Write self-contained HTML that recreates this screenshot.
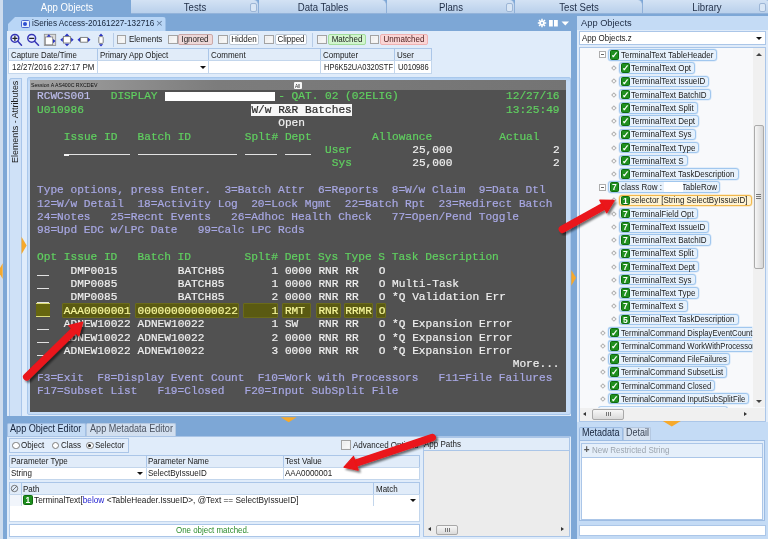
<!DOCTYPE html><html><head><meta charset="utf-8"><title>App Objects</title><style>
*{box-sizing:border-box;margin:0;padding:0}
html,body{width:768px;height:539px;overflow:hidden;background:#7da7d6}
body{filter:blur(.45px);position:relative;font-family:"Liberation Sans",sans-serif;font-size:8.8px;color:#1b1b1b;line-height:10px}
.a{position:absolute;white-space:pre}
.x{position:absolute;white-space:pre;line-height:10px;height:10px;transform-origin:0 0;transform:scaleX(.91)}
.xc{position:absolute;white-space:pre;line-height:10px;height:10px;text-align:center;transform-origin:50% 0;transform:scaleX(.91)}
.t{position:absolute;white-space:pre;font-family:"Liberation Mono",monospace;font-size:11.17px;line-height:13.4px;height:13.4px;letter-spacing:-.002px;-webkit-text-stroke:.2px}
.g{color:#60d060}.w{color:#efefef}.l{color:#a8a8e4}.p{color:#bcbcea}.y{color:#f6f69a}
.toptab{position:absolute;top:0;height:13.5px;width:128px;background:linear-gradient(#d3e2f4,#b9d0eb);border-right:1px solid #8fb0d8;border-bottom:1px solid #93b3da;border-radius:0 5px 0 0}
.cb{position:absolute;width:9.5px;height:9.5px;background:linear-gradient(135deg,#e9e9e9,#fdfdfd);border:1px solid #a3a3a3;box-shadow:inset 0 0 0 1px #f3f3f3}
.btn{position:absolute;height:11.5px;border:1px solid #bcc7d4;border-radius:2px;background:#fff}
.hd{position:absolute;background:#e1ecf9;border:1px solid #abc6e8}
.cell{position:absolute;background:#fff;border:1px solid #c3d6ec}
.ti{position:absolute;height:11.5px;border:1px solid #a1c7ee;border-radius:3px;background:#e6f1fc;box-shadow:0 0 0 .5px #cfe3f8}
.ic{position:absolute;width:9.5px;height:9.5px;border-radius:1.5px;background:#1f8f1f;border:.5px solid #0f6a0f;color:#fff;font-size:8.5px;font-weight:bold;line-height:9px;text-align:center}
.dm{position:absolute;width:3.8px;height:3.8px;border:.8px solid #b0b0b0;background:#fff;transform:rotate(45deg)}
</style></head><body>
<div class="a" style="left:0px;top:0px;width:3px;height:539px;background:#cddcee"></div>
<div class="toptab" style="left:3px;background:#7da7d6;border-color:#7da7d6"></div>
<div class="xc" style="left:-33px;width:200px;top:2.84px;font-size:10px;transform:scaleX(0.96);color:#fff;">App Objects</div>
<div class="toptab" style="left:131px"></div>
<div class="xc" style="left:95px;width:200px;top:2.84px;font-size:10px;transform:scaleX(0.96);color:#1e2c44;">Tests</div>
<div class="toptab" style="left:259px"></div>
<div class="xc" style="left:223px;width:200px;top:2.84px;font-size:10px;transform:scaleX(0.96);color:#1e2c44;">Data Tables</div>
<div class="toptab" style="left:387px"></div>
<div class="xc" style="left:351px;width:200px;top:2.84px;font-size:10px;transform:scaleX(0.96);color:#1e2c44;">Plans</div>
<div class="toptab" style="left:515px"></div>
<div class="xc" style="left:479px;width:200px;top:2.84px;font-size:10px;transform:scaleX(0.96);color:#1e2c44;">Test Sets</div>
<div class="toptab" style="left:643px"></div>
<div class="xc" style="left:607px;width:200px;top:2.84px;font-size:10px;transform:scaleX(0.96);color:#1e2c44;">Library</div>
<div class="a" style="left:250px;top:3px;width:7px;height:8.5px;border:1px solid #9db6d6;border-radius:2px;background:#d9e6f5"></div>
<div class="a" style="left:506px;top:3px;width:7px;height:8.5px;border:1px solid #9db6d6;border-radius:2px;background:#d9e6f5"></div>
<div class="a" style="left:759px;top:3px;width:7px;height:8.5px;border:1px solid #9db6d6;border-radius:2px;background:#d9e6f5"></div>
<div class="a" style="left:8px;top:17px;width:157.5px;height:14px;background:#b9d6f6;border-radius:2px 3px 0 0;clip-path:polygon(7px 0,100% 0,100% 100%,0 100%,0 7px)"></div>
<div class="a" style="left:21px;top:19.5px;width:8.5px;height:8.5px;border:1px solid #4a68cf;border-radius:1.5px;background:#e6eefc"></div>
<div class="a" style="left:23.3px;top:22.3px;width:4px;height:4px;border-radius:2px;background:#2e4fd0"></div>
<div class="x" style="left:31.7px;top:18.28px;font-size:9.3px;transform:scaleX(0.88);color:#142238;">iSeries Access-20161227-132716</div>
<div class="x" style="left:156px;top:17.62px;font-size:11.5px;transform:scaleX(1);color:#5f7797;">×</div>
<svg class="a" style="left:536px;top:17px" width="36" height="13" viewBox="536 17 36 13"><g fill="#fff"><circle cx="542" cy="23" r="2.6"/><g stroke="#fff" stroke-width="1.5"><line x1="542" y1="18.8" x2="542" y2="27.2"/><line x1="537.8" y1="23" x2="546.2" y2="23"/><line x1="539" y1="20" x2="545" y2="26"/><line x1="545" y1="20" x2="539" y2="26"/></g><circle cx="542" cy="23" r="1" fill="#7da7d6"/><rect x="549" y="20" width="3.8" height="6.500"/><rect x="554" y="20" width="3.800" height="6.500"/><path d="M561.500 21.500h7.500l-3.750 4z"/></g></svg>
<div class="a" style="left:6.7px;top:30.5px;width:564.3px;height:385.5px;background:#e0ecfa"></div>
<svg class="a" style="left:8px;top:31px" width="100" height="17" viewBox="8 31 100 17">
<g fill="none" stroke="#3535b5" stroke-width="1.500" stroke-linecap="round">
<circle cx="14.900" cy="38.300" r="3.900" fill="#e8ecff"/><line x1="17.800" y1="41.300" x2="21.500" y2="45.200"/><path d="M12.800 38.300h4.200M14.900 36.200v4.200" stroke-width="1.200" stroke="#222"/>
<circle cx="31.700" cy="38.300" r="3.900" fill="#e8ecff"/><line x1="34.600" y1="41.300" x2="38.500" y2="45.200"/><path d="M29.600 38.300h4.200" stroke-width="1.200" stroke="#222"/>
</g>
<rect x="44.300" y="34.300" width="11.400" height="11.200" fill="#dcdcdc" stroke="#8c8c8c" stroke-width=".8"/><rect x="45.300" y="37" width="7.400" height="7.800" fill="#fff" stroke="#777" stroke-width=".7"/><path d="M46.600 36.800l2.200-2.500 2.200 2.500zM53 39l2.600 2.100-2.600 2.100z" fill="#2a33c0"/>
<rect x="63.400" y="36.600" width="7" height="6.400" fill="#fff" stroke="#777" stroke-width=".9"/><path d="M64.600 36l2.400-2.500 2.400 2.500zM64.600 43.800l2.400 2.500 2.400-2.500zM62.800 37.600l-2.500 2.200 2.500 2.200zM71.100 37.600l2.500 2.200-2.500 2.200z" fill="#2a33c0"/>
<rect x="80.600" y="37.400" width="6.800" height="4.800" fill="#fff" stroke="#777" stroke-width=".9"/><path d="M80 37.600l-2.500 2.200 2.500 2.200zM88 37.600l2.500 2.200-2.500 2.200z" fill="#2a33c0"/>
<rect x="98.800" y="36.600" width="4.400" height="6.800" rx="1" fill="#fff" stroke="#777" stroke-width=".9"/><path d="M98.800 36l2.200-2.400 2.200 2.400zM98.800 44.200l2.200 2.300 2.200-2.300z" fill="#2a33c0"/>
</svg>
<div class="a" style="left:112.5px;top:33px;width:1px;height:14px;background:#b7cce7"></div>
<div class="a" style="left:312px;top:33px;width:1px;height:14px;background:#b7cce7"></div>
<div class="cb" style="left:116.5px;top:34.5px;width:9.5px;height:9.5px;"></div>
<div class="x" style="left:128.5px;top:34.45px;">Elements</div>
<div class="cb" style="left:168px;top:34.5px;width:9.5px;height:9.5px;"></div>
<div class="btn" style="left:178px;top:33.5px;width:34.5px;height:11.5px;background:#eed8d8;border-color:#cba9a9;"></div>
<div class="xc" style="left:95.25px;width:200px;top:34.45px;">Ignored</div>
<div class="cb" style="left:218px;top:34.5px;width:9.5px;height:9.5px;"></div>
<div class="btn" style="left:228.5px;top:33.5px;width:30px;height:11.5px;"></div>
<div class="xc" style="left:143.5px;width:200px;top:34.45px;">Hidden</div>
<div class="cb" style="left:264px;top:34.5px;width:9.5px;height:9.5px;"></div>
<div class="btn" style="left:275px;top:33.5px;width:31.5px;height:11.5px;"></div>
<div class="xc" style="left:190.75px;width:200px;top:34.45px;">Clipped</div>
<div class="cb" style="left:317px;top:34.5px;width:9.5px;height:9.5px;"></div>
<div class="btn" style="left:328px;top:33.5px;width:37.5px;height:11.5px;background:#d2f6ce;border-color:#a3dd9d;"></div>
<div class="xc" style="left:246.75px;width:200px;top:34.45px;">Matched</div>
<div class="cb" style="left:369.5px;top:34.5px;width:9.5px;height:9.5px;"></div>
<div class="btn" style="left:380px;top:33.5px;width:47.5px;height:11.5px;background:#fbd5d5;border-color:#f0b2b2;"></div>
<div class="xc" style="left:303.75px;width:200px;top:34.45px;color:#4a1c1c;">Unmatched</div>
<div class="hd" style="left:8px;top:48px;width:90px;height:13px;"></div>
<div class="cell" style="left:8px;top:60px;width:90px;height:14px;"></div>
<div class="x" style="left:11px;top:49.95px;transform:scaleX(0.89);">Capture Date/Time</div>
<div class="x" style="left:11.7px;top:61.85px;transform:scaleX(0.9);">12/27/2016 2:27:17 PM</div>
<div class="hd" style="left:97px;top:48px;width:113px;height:13px;"></div>
<div class="cell" style="left:97px;top:60px;width:113px;height:14px;"></div>
<div class="x" style="left:100px;top:49.95px;transform:scaleX(0.9);">Primary App Object</div>
<div class="hd" style="left:208px;top:48px;width:113px;height:13px;"></div>
<div class="cell" style="left:208px;top:60px;width:113px;height:14px;"></div>
<div class="x" style="left:211px;top:49.95px;">Comment</div>
<div class="hd" style="left:320px;top:48px;width:75px;height:13px;"></div>
<div class="cell" style="left:320px;top:60px;width:75px;height:14px;"></div>
<div class="x" style="left:323px;top:49.95px;">Computer</div>
<div class="x" style="left:323.7px;top:61.85px;transform:scaleX(0.85);">HP6K52UA0320STF</div>
<div class="hd" style="left:394px;top:48px;width:38px;height:13px;"></div>
<div class="cell" style="left:394px;top:60px;width:38px;height:14px;"></div>
<div class="x" style="left:397px;top:49.95px;">User</div>
<div class="x" style="left:397.7px;top:61.85px;transform:scaleX(0.86);">U010986</div>
<div class="a" style="left:199.5px;top:66px;width:0;height:0;border-left:3px solid transparent;border-right:3px solid transparent;border-top:3.5px solid #111"></div>
<div class="a" style="left:8.5px;top:77.5px;width:13px;height:338px;background:#c7dcf5;border-left:1px solid #e3eefb;border-right:1px solid #a9c6ea"></div>
<div class="a" style="left:22px;top:77.5px;width:5px;height:338px;background:#dfecfb"></div>
<div class="a" style="left:8.5px;top:77.5px;width:13.5px;height:338px;background:#cfe1f7;border:1px solid #a9c6ea;border-bottom:none;border-radius:3px 0 0 0"></div>
<div class="a" style="left:10.3px;top:162.5px;transform-origin:0 0;transform:rotate(-90deg) scaleX(.93);font-size:9.6px;line-height:10px;color:#1b1b1b">Elements - Attributes</div>
<div class="a" style="left:27px;top:76.5px;width:544px;height:338.5px;border:1px solid #a9c8ec;background:linear-gradient(#b3d1f3,#c6dcf6 4px);border-radius:2px"></div>
<div class="a" style="left:29.5px;top:80px;width:536px;height:10px;background:linear-gradient(90deg,#a2a2a2,#7c7c7c 35%,#747474)"></div>
<div class="x" style="left:31px;top:80.36px;font-size:5.6px;transform:scaleX(0.93);color:#0c0c0c;">Session A AS400C RXCDEV</div>
<div class="a" style="left:293.5px;top:81.5px;width:8px;height:7px;background:#f6f6f6;border-radius:1px"></div>
<div class="x" style="left:294.7px;top:80.57px;font-size:5px;transform:scaleX(0.95);color:#222;">All</div>
<div class="a" style="left:29.5px;top:89.5px;width:536px;height:322px;background:#515151"></div>
<div class="t p" style="left:37px;top:90.4px;">RCWCS001</div>
<div class="t g" style="left:110.7px;top:90.4px;">DISPLAY</div>
<div class="a" style="left:164.9px;top:91.8px;width:109.88px;height:9.3px;background:#fff"></div>
<div class="t g" style="left:278.2px;top:90.4px;">- QAT. 02 (02ELIG)</div>
<div class="t g" style="left:506px;top:90.4px;">12/27/16</div>
<div class="t g" style="left:37px;top:103.8px;">U010986</div>
<div class="a" style="left:250.8px;top:103.5px;width:101.7px;height:12.6px;background:#f7f7f7"></div>
<div class="t " style="left:251.4px;top:103.8px;color:#2e2e2e">W/w R&amp;R Batches</div>
<div class="t g" style="left:506px;top:103.8px;">13:25:49</div>
<div class="t w" style="left:278.2px;top:117.2px;">Open</div>
<div class="t g" style="left:63.8px;top:130.6px;">Issue ID</div>
<div class="t g" style="left:137.5px;top:130.6px;">Batch ID</div>
<div class="t g" style="left:244.7px;top:130.6px;">Splt#</div>
<div class="t g" style="left:284.9px;top:130.6px;">Dept</div>
<div class="t g" style="left:372px;top:130.6px;">Allowance</div>
<div class="t g" style="left:499.3px;top:130.6px;">Actual</div>
<div class="a" style="left:63.8px;top:154px;width:66px;height:1.2px;background:#e2e2e2"></div>
<div class="a" style="left:137.5px;top:154px;width:99.5px;height:1.2px;background:#e2e2e2"></div>
<div class="a" style="left:244.7px;top:154px;width:32.5px;height:1.2px;background:#e2e2e2"></div>
<div class="a" style="left:284.9px;top:154px;width:25.8px;height:1.2px;background:#e2e2e2"></div>
<div class="a" style="left:63.8px;top:153.7px;width:5px;height:2.4px;background:#f3f3f3"></div>
<div class="t g" style="left:325.1px;top:144px;">User</div>
<div class="t w" style="left:412.2px;top:144px;">25,000</div>
<div class="t w" style="left:552.9px;top:144px;">2</div>
<div class="t g" style="left:331.8px;top:157.4px;">Sys</div>
<div class="t w" style="left:412.2px;top:157.4px;">25,000</div>
<div class="t w" style="left:552.9px;top:157.4px;">2</div>
<div class="t l" style="left:37px;top:184.2px;">Type options, press Enter.  3=Batch Attr  6=Reports  8=W/w Claim  9=Data Dtl</div>
<div class="t l" style="left:37px;top:197.6px;">12=W/w Detail  18=Activity Log  20=Lock Mgmt  22=Batch Rpt  23=Redirect Batch</div>
<div class="t l" style="left:37px;top:211px;">24=Notes   25=Recnt Events   26=Adhoc Health Check   77=Open/Pend Toggle</div>
<div class="t l" style="left:37px;top:224.4px;">98=Upd EDC w/LPC Date   99=Calc LPC Rcds</div>
<div class="t g" style="left:37px;top:251.2px;">Opt Issue ID   Batch ID        Splt# Dept Sys Type S Task Description</div>
<div class="a" style="left:37px;top:275px;width:12.4px;height:1.2px;background:#e2e2e2"></div>
<div class="t w" style="left:70.5px;top:264.6px;">DMP0015</div>
<div class="t w" style="left:177.7px;top:264.6px;">BATCH85</div>
<div class="t w" style="left:271.5px;top:264.6px;">1</div>
<div class="t w" style="left:284.9px;top:264.6px;">0000</div>
<div class="t w" style="left:318.4px;top:264.6px;">RNR</div>
<div class="t w" style="left:345.2px;top:264.6px;">RR</div>
<div class="t w" style="left:378.7px;top:264.6px;">O</div>
<div class="a" style="left:37px;top:288px;width:12.4px;height:1.2px;background:#e2e2e2"></div>
<div class="t w" style="left:70.5px;top:278px;">DMP0085</div>
<div class="t w" style="left:177.7px;top:278px;">BATCH85</div>
<div class="t w" style="left:271.5px;top:278px;">1</div>
<div class="t w" style="left:284.9px;top:278px;">0000</div>
<div class="t w" style="left:318.4px;top:278px;">RNR</div>
<div class="t w" style="left:345.2px;top:278px;">RR</div>
<div class="t w" style="left:378.7px;top:278px;">O</div>
<div class="t w" style="left:392.1px;top:278px;">Multi-Task</div>
<div class="a" style="left:37px;top:302px;width:12.4px;height:1.2px;background:#e2e2e2"></div>
<div class="t w" style="left:70.5px;top:291.4px;">DMP0085</div>
<div class="t w" style="left:177.7px;top:291.4px;">BATCH85</div>
<div class="t w" style="left:271.5px;top:291.4px;">2</div>
<div class="t w" style="left:284.9px;top:291.4px;">0000</div>
<div class="t w" style="left:318.4px;top:291.4px;">RNR</div>
<div class="t w" style="left:345.2px;top:291.4px;">RR</div>
<div class="t w" style="left:378.7px;top:291.4px;">O</div>
<div class="t w" style="left:392.1px;top:291.4px;">*Q Validation Err</div>
<div class="a" style="left:37px;top:329px;width:12.4px;height:1.2px;background:#e2e2e2"></div>
<div class="t w" style="left:63.8px;top:318.2px;">ADNEW10022</div>
<div class="t w" style="left:137.5px;top:318.2px;">ADNEW10022</div>
<div class="t w" style="left:271.5px;top:318.2px;">1</div>
<div class="t w" style="left:284.9px;top:318.2px;">SW</div>
<div class="t w" style="left:318.4px;top:318.2px;">RNR</div>
<div class="t w" style="left:345.2px;top:318.2px;">RR</div>
<div class="t w" style="left:378.7px;top:318.2px;">O</div>
<div class="t w" style="left:392.1px;top:318.2px;">*Q Expansion Error</div>
<div class="a" style="left:37px;top:342px;width:12.4px;height:1.2px;background:#e2e2e2"></div>
<div class="t w" style="left:63.8px;top:331.6px;">ADNEW10022</div>
<div class="t w" style="left:137.5px;top:331.6px;">ADNEW10022</div>
<div class="t w" style="left:271.5px;top:331.6px;">2</div>
<div class="t w" style="left:284.9px;top:331.6px;">0000</div>
<div class="t w" style="left:318.4px;top:331.6px;">RNR</div>
<div class="t w" style="left:345.2px;top:331.6px;">RR</div>
<div class="t w" style="left:378.7px;top:331.6px;">O</div>
<div class="t w" style="left:392.1px;top:331.6px;">*Q Expansion Error</div>
<div class="a" style="left:37px;top:355px;width:12.4px;height:1.2px;background:#e2e2e2"></div>
<div class="t w" style="left:63.8px;top:345px;">ADNEW10022</div>
<div class="t w" style="left:137.5px;top:345px;">ADNEW10022</div>
<div class="t w" style="left:271.5px;top:345px;">3</div>
<div class="t w" style="left:284.9px;top:345px;">0000</div>
<div class="t w" style="left:318.4px;top:345px;">RNR</div>
<div class="t w" style="left:345.2px;top:345px;">RR</div>
<div class="t w" style="left:378.7px;top:345px;">O</div>
<div class="t w" style="left:392.1px;top:345px;">*Q Expansion Error</div>
<div class="a" style="left:36px;top:303px;width:13.5px;height:14px;background:#66660f;border-top:1.3px solid #dcdc7a;border-bottom:1.3px solid #dcdc7a"></div>
<div class="a" style="left:61.7px;top:303.3px;width:68.8px;height:14.6px;background:#5a5a12;border:1px solid #6a6a1a;border-radius:1px"></div>
<div class="a" style="left:134.8px;top:303.3px;width:104.2px;height:14.6px;background:#5a5a12;border:1px solid #6a6a1a;border-radius:1px"></div>
<div class="a" style="left:243px;top:303.3px;width:35px;height:14.6px;background:#5a5a12;border:1px solid #6a6a1a;border-radius:1px"></div>
<div class="a" style="left:282px;top:303.3px;width:29px;height:14.6px;background:#5a5a12;border:1px solid #6a6a1a;border-radius:1px"></div>
<div class="a" style="left:316px;top:303.3px;width:24.5px;height:14.6px;background:#5a5a12;border:1px solid #6a6a1a;border-radius:1px"></div>
<div class="a" style="left:343.7px;top:303.3px;width:29.3px;height:14.6px;background:#5a5a12;border:1px solid #6a6a1a;border-radius:1px"></div>
<div class="a" style="left:375.7px;top:303.3px;width:10.3px;height:14.6px;background:#5a5a12;border:1px solid #6a6a1a;border-radius:1px"></div>
<div class="t y" style="left:63.8px;top:304.8px;">AAA0000001</div>
<div class="t y" style="left:137.5px;top:304.8px;">000000000000022</div>
<div class="t y" style="left:271.5px;top:304.8px;">1</div>
<div class="t y" style="left:284.9px;top:304.8px;">RMT</div>
<div class="t y" style="left:318.4px;top:304.8px;">RNR</div>
<div class="t y" style="left:345.2px;top:304.8px;">RRMR</div>
<div class="t y" style="left:378.7px;top:304.8px;">O</div>
<div class="t w" style="left:512.7px;top:358.4px;">More...</div>
<div class="t l" style="left:37px;top:371.8px;">F3=Exit  F8=Display Event Count  F10=Work with Processors   F11=File Failures</div>
<div class="t l" style="left:37px;top:385.2px;">F17=Subset List   F19=Closed   F20=Input SubSplit File</div>
<svg class="a" style="left:0;top:230px" width="30" height="56" viewBox="0 230 30 56"><path d="M21.500 236.700l5.200 8.700-5.200 8.800z" fill="#f6a92c"/><path d="M2.700 263.300l-4.500 7.800 4.500 7.900z" fill="#f6a92c"/></svg>
<svg class="a" style="left:278px;top:415px" width="22" height="9" viewBox="278 415 22 9"><path d="M280.700 417.200h16l-8 5z" fill="#f6a92c"/></svg>
<svg class="a" style="left:570px;top:268px" width="8" height="20" viewBox="570 268 8 20"><path d="M571.300 270l4.800 7.800-4.800 7.900z" fill="#f6a92c"/></svg>
<div class="a" style="left:7px;top:422.5px;width:79px;height:13.5px;background:#c4dbf5;border:1px solid #a3c0e4;border-bottom:none;border-radius:2px 2px 0 0"></div>
<div class="x" style="left:10px;top:424.14px;font-size:10px;transform:scaleX(0.91);color:#15233b;">App Object Editor</div>
<div class="a" style="left:86px;top:423px;width:89.5px;height:13px;background:#d2dfef;border:1px solid #b4c8e1;border-bottom:none;border-radius:2px 2px 0 0"></div>
<div class="x" style="left:89.5px;top:424.14px;font-size:10px;transform:scaleX(0.91);color:#4a5260;">App Metadata Editor</div>
<div class="a" style="left:7px;top:435.5px;width:563.5px;height:103.5px;background:#e0ecfa;border-top:1px solid #a9c4e6"></div>
<div class="a" style="left:8.5px;top:438px;width:120px;height:14.5px;border:1px solid #abc6e8;background:#e3eefb"></div>
<div class="a" style="left:12px;top:441.5px;width:7.5px;height:7.5px;border:1px solid #7d7d7d;border-radius:4px;background:#fff"></div>
<div class="x" style="left:21px;top:440.25px;">Object</div>
<div class="a" style="left:51.5px;top:441.5px;width:7.5px;height:7.5px;border:1px solid #7d7d7d;border-radius:4px;background:#fff"></div>
<div class="x" style="left:60.5px;top:440.25px;">Class</div>
<div class="a" style="left:86px;top:441.5px;width:7.5px;height:7.5px;border:1px solid #7d7d7d;border-radius:4px;background:#fff"></div>
<div class="a" style="left:88.2px;top:443.7px;width:3.1px;height:3.1px;border-radius:2px;background:#222"></div>
<div class="x" style="left:95px;top:440.25px;">Selector</div>
<div class="cb" style="left:341px;top:440.3px;width:9.5px;height:9.5px;"></div>
<div class="x" style="left:352.7px;top:440.35px;">Advanced Options</div>
<div class="hd" style="left:8.5px;top:454.5px;width:138px;height:13px;"></div>
<div class="cell" style="left:8.5px;top:466.5px;width:138px;height:13px;"></div>
<div class="x" style="left:10.5px;top:456.25px;">Parameter Type</div>
<div class="x" style="left:10.5px;top:468.25px;">String</div>
<div class="hd" style="left:145.5px;top:454.5px;width:138px;height:13px;"></div>
<div class="cell" style="left:145.5px;top:466.5px;width:138px;height:13px;"></div>
<div class="x" style="left:147.5px;top:456.25px;">Parameter Name</div>
<div class="x" style="left:147.5px;top:468.25px;">SelectByIssueID</div>
<div class="hd" style="left:282.5px;top:454.5px;width:137px;height:13px;"></div>
<div class="cell" style="left:282.5px;top:466.5px;width:137px;height:13px;"></div>
<div class="x" style="left:284.5px;top:456.25px;">Test Value</div>
<div class="x" style="left:284.5px;top:468.25px;">AAA0000001</div>
<div class="a" style="left:137px;top:471.5px;width:0;height:0;border-left:3px solid transparent;border-right:3px solid transparent;border-top:3.5px solid #111"></div>
<div class="hd" style="left:8.5px;top:482px;width:13.5px;height:12.5px;"></div>
<div class="hd" style="left:21px;top:482px;width:353px;height:12.5px;"></div>
<div class="hd" style="left:373px;top:482px;width:46.5px;height:12.5px;"></div>
<svg class="a" style="left:10px;top:484px" width="9" height="9" viewBox="0 0 9 9"><circle cx="4.500" cy="4.500" r="3.200" fill="none" stroke="#555" stroke-width=".8"/><line x1="2.300" y1="6.700" x2="6.700" y2="2.300" stroke="#555" stroke-width=".8"/></svg>
<div class="x" style="left:23px;top:483.75px;">Path</div>
<div class="x" style="left:375.5px;top:483.75px;">Match</div>
<div class="cell" style="left:8.5px;top:493.5px;width:13.5px;height:13px;background:#f1f5fb"></div>
<div class="cell" style="left:21px;top:493.5px;width:353px;height:13px;"></div>
<div class="cell" style="left:373px;top:493.5px;width:46.5px;height:13px;"></div>
<div class="ic" style="left:23px;top:495.300px">1</div>
<div class="x" style="left:34.4px;top:495.35px;transform:scaleX(0.94);">TerminalText[<span style="color:#2424d0">below</span> &lt;TableHeader.IssueID&gt;, @Text == SelectByIssueID]</div>
<div class="a" style="left:410px;top:498.5px;width:0;height:0;border-left:3px solid transparent;border-right:3px solid transparent;border-top:3.5px solid #111"></div>
<div class="a" style="left:8.5px;top:506px;width:411px;height:15.5px;background:#fff;border:1px solid #c3d6ec;border-top:none"></div>
<div class="a" style="left:8.5px;top:523.5px;width:411px;height:13.5px;background:#fff;border:1px solid #abc6e8"></div>
<div class="x" style="left:175.8px;top:525.15px;transform:scaleX(0.9);color:#2c8c2c;">One object matched.</div>
<div class="a" style="left:422.5px;top:436.5px;width:147px;height:100px;background:#ececec;border:1px solid #abc6e8"></div>
<div class="a" style="left:422.5px;top:436.5px;width:147px;height:14px;background:#e1ecf9;border:1px solid #abc6e8"></div>
<div class="x" style="left:423.5px;top:439.25px;">App Paths</div>
<div class="a" style="left:427.5px;top:526.5px;width:0;height:0;border-top:2.5px solid transparent;border-bottom:2.5px solid transparent;border-right:3px solid #333"></div>
<div class="a" style="left:561px;top:526.5px;width:0;height:0;border-top:2.5px solid transparent;border-bottom:2.5px solid transparent;border-left:3px solid #333"></div>
<div class="a" style="left:436px;top:524.5px;width:22px;height:10px;background:linear-gradient(#f7f7f7,#dadada);border:1px solid #a8a8a8;border-radius:2px"></div>
<div class="a" style="left:444.5px;top:527.5px;width:1px;height:4px;background:#777;box-shadow:2px 0 #777,4px 0 #777"></div>
<div class="a" style="left:577px;top:16px;width:191px;height:14.5px;background:#c4dbf5"></div>
<div class="x" style="left:581px;top:18.44px;font-size:9.7px;transform:scaleX(0.96);color:#1e2c44;">App Objects</div>
<div class="a" style="left:577px;top:30px;width:191px;height:392px;background:#e0ecfa"></div>
<div class="a" style="left:578.5px;top:30.5px;width:187px;height:14px;background:#fff;border:1px solid #abc6e8"></div>
<div class="x" style="left:582px;top:32.95px;">App Objects.z</div>
<div class="a" style="left:756px;top:36.5px;width:0;height:0;border-left:3px solid transparent;border-right:3px solid transparent;border-top:3.5px solid #111"></div>
<div class="a" style="left:578.5px;top:47px;width:187px;height:374.5px;background:#f8f9fb;border:1px solid #abc6e8"></div>
<div class="ti" style="left:608.2px;top:49.2px;width:108.43px;height:11.5px;"></div>
<div class="ic" style="left:609.7px;top:50.2px">✓</div>
<div class="x" style="left:620.5px;top:50.05px;">TerminalText TableHeader</div>
<div class="a" style="left:598.8px;top:51.4px;width:7px;height:7px;border:1px solid #adadad;background:#fff"></div>
<div class="a" style="left:600.8px;top:54.4px;width:3px;height:1px;background:#666"></div>
<div class="ti" style="left:619px;top:62.42px;width:76.08px;height:11.5px;"></div>
<div class="ic" style="left:620.5px;top:63.42px">✓</div>
<div class="x" style="left:631.3px;top:63.27px;">TerminalText Opt</div>
<div class="dm" style="left:611.6px;top:66.22px;width:3.8px;height:3.8px;"></div>
<div class="ti" style="left:619px;top:75.64px;width:90.32px;height:11.5px;"></div>
<div class="ic" style="left:620.5px;top:76.64px">✓</div>
<div class="x" style="left:631.3px;top:76.49px;">TerminalText IssueID</div>
<div class="dm" style="left:611.6px;top:79.44px;width:3.8px;height:3.8px;"></div>
<div class="ti" style="left:619px;top:88.86px;width:91.65px;height:11.5px;"></div>
<div class="ic" style="left:620.5px;top:89.86px">✓</div>
<div class="x" style="left:631.3px;top:89.71px;">TerminalText BatchID</div>
<div class="dm" style="left:611.6px;top:92.66px;width:3.8px;height:3.8px;"></div>
<div class="ti" style="left:619px;top:102.08px;width:78.75px;height:11.5px;"></div>
<div class="ic" style="left:620.5px;top:103.08px">✓</div>
<div class="x" style="left:631.3px;top:102.93px;">TerminalText Split</div>
<div class="dm" style="left:611.6px;top:105.88px;width:3.8px;height:3.8px;"></div>
<div class="ti" style="left:619px;top:115.3px;width:80.08px;height:11.5px;"></div>
<div class="ic" style="left:620.5px;top:116.3px">✓</div>
<div class="x" style="left:631.3px;top:116.15px;">TerminalText Dept</div>
<div class="dm" style="left:611.6px;top:119.1px;width:3.8px;height:3.8px;"></div>
<div class="ti" style="left:619px;top:128.52px;width:76.52px;height:11.5px;"></div>
<div class="ic" style="left:620.5px;top:129.52px">✓</div>
<div class="x" style="left:631.3px;top:129.37px;">TerminalText Sys</div>
<div class="dm" style="left:611.6px;top:132.32px;width:3.8px;height:3.8px;"></div>
<div class="ti" style="left:619px;top:141.74px;width:80.38px;height:11.5px;"></div>
<div class="ic" style="left:620.5px;top:142.74px">✓</div>
<div class="x" style="left:631.3px;top:142.59px;">TerminalText Type</div>
<div class="dm" style="left:611.6px;top:145.54px;width:3.8px;height:3.8px;"></div>
<div class="ti" style="left:619px;top:154.96px;width:68.51px;height:11.5px;"></div>
<div class="ic" style="left:620.5px;top:155.96px">✓</div>
<div class="x" style="left:631.3px;top:155.81px;">TerminalText S</div>
<div class="dm" style="left:611.6px;top:158.76px;width:3.8px;height:3.8px;"></div>
<div class="ti" style="left:619px;top:168.18px;width:119.54px;height:11.5px;"></div>
<div class="ic" style="left:620.5px;top:169.18px">✓</div>
<div class="x" style="left:631.3px;top:169.03px;">TerminalText TaskDescription</div>
<div class="dm" style="left:611.6px;top:171.98px;width:3.8px;height:3.8px;"></div>
<div class="ti" style="left:608.2px;top:181.4px;width:111.98px;height:11.5px;"></div>
<div class="ic" style="left:609.7px;top:182.4px">7</div>
<div class="x" style="left:620.5px;top:182.25px;">class Row :         TableRow</div>
<div class="a" style="left:598.8px;top:183.6px;width:7px;height:7px;border:1px solid #adadad;background:#fff"></div>
<div class="a" style="left:600.8px;top:186.6px;width:3px;height:1px;background:#666"></div>
<div class="ti" style="left:619px;top:194.62px;width:132.6px;height:11.5px;background:#fff3d2;border-color:#f2b84c;box-shadow:0 0 0 .5px #f9dca0"></div>
<div class="ic" style="left:620.5px;top:195.62px">1</div>
<div class="x" style="left:631.3px;top:195.47px;">selector [String SelectByIssueID]</div>
<div class="dm" style="left:611.6px;top:198.42px;width:3.8px;height:3.8px;"></div>
<div class="ti" style="left:619px;top:207.84px;width:78.75px;height:11.5px;"></div>
<div class="ic" style="left:620.5px;top:208.84px">7</div>
<div class="x" style="left:631.3px;top:208.69px;">TerminalField Opt</div>
<div class="dm" style="left:611.6px;top:211.64px;width:3.8px;height:3.8px;"></div>
<div class="ti" style="left:619px;top:221.06px;width:90.32px;height:11.5px;"></div>
<div class="ic" style="left:620.5px;top:222.06px">7</div>
<div class="x" style="left:631.3px;top:221.91px;">TerminalText IssueID</div>
<div class="dm" style="left:611.6px;top:224.86px;width:3.8px;height:3.8px;"></div>
<div class="ti" style="left:619px;top:234.28px;width:91.65px;height:11.5px;"></div>
<div class="ic" style="left:620.5px;top:235.28px">7</div>
<div class="x" style="left:631.3px;top:235.13px;">TerminalText BatchID</div>
<div class="dm" style="left:611.6px;top:238.08px;width:3.8px;height:3.8px;"></div>
<div class="ti" style="left:619px;top:247.5px;width:78.75px;height:11.5px;"></div>
<div class="ic" style="left:620.5px;top:248.5px">7</div>
<div class="x" style="left:631.3px;top:248.35px;">TerminalText Split</div>
<div class="dm" style="left:611.6px;top:251.3px;width:3.8px;height:3.8px;"></div>
<div class="ti" style="left:619px;top:260.72px;width:80.08px;height:11.5px;"></div>
<div class="ic" style="left:620.5px;top:261.72px">7</div>
<div class="x" style="left:631.3px;top:261.57px;">TerminalText Dept</div>
<div class="dm" style="left:611.6px;top:264.52px;width:3.8px;height:3.8px;"></div>
<div class="ti" style="left:619px;top:273.94px;width:76.52px;height:11.5px;"></div>
<div class="ic" style="left:620.5px;top:274.94px">7</div>
<div class="x" style="left:631.3px;top:274.79px;">TerminalText Sys</div>
<div class="dm" style="left:611.6px;top:277.74px;width:3.8px;height:3.8px;"></div>
<div class="ti" style="left:619px;top:287.16px;width:80.38px;height:11.5px;"></div>
<div class="ic" style="left:620.5px;top:288.16px">7</div>
<div class="x" style="left:631.3px;top:288.01px;">TerminalText Type</div>
<div class="dm" style="left:611.6px;top:290.96px;width:3.8px;height:3.8px;"></div>
<div class="ti" style="left:619px;top:300.38px;width:68.51px;height:11.5px;"></div>
<div class="ic" style="left:620.5px;top:301.38px">7</div>
<div class="x" style="left:631.3px;top:301.23px;">TerminalText S</div>
<div class="dm" style="left:611.6px;top:304.18px;width:3.8px;height:3.8px;"></div>
<div class="ti" style="left:619px;top:313.6px;width:119.54px;height:11.5px;"></div>
<div class="ic" style="left:620.5px;top:314.6px">5</div>
<div class="x" style="left:631.3px;top:314.45px;">TerminalText TaskDescription</div>
<div class="dm" style="left:611.6px;top:317.4px;width:3.8px;height:3.8px;"></div>
<div class="ti" style="left:608.2px;top:326.82px;width:144.3px;height:11.5px;border-right:none;border-radius:3px 0 0 3px"></div>
<div class="ic" style="left:609.7px;top:327.82px">✓</div>
<div class="a" style="left:620.5px;top:326.82px;width:132px;height:11.500px;overflow:hidden"><div class="x" style="left:0;top:0.85px;transform:scaleX(0.87)">TerminalCommand DisplayEventCount</div></div>
<div class="dm" style="left:600.6px;top:330.62px;width:3.8px;height:3.8px;"></div>
<div class="ti" style="left:608.2px;top:340.04px;width:144.3px;height:11.5px;border-right:none;border-radius:3px 0 0 3px"></div>
<div class="ic" style="left:609.7px;top:341.04px">✓</div>
<div class="a" style="left:620.5px;top:340.04px;width:132px;height:11.500px;overflow:hidden"><div class="x" style="left:0;top:0.85px;transform:scaleX(0.87)">TerminalCommand WorkWithProcessors</div></div>
<div class="dm" style="left:600.6px;top:343.84px;width:3.8px;height:3.8px;"></div>
<div class="ti" style="left:608.2px;top:353.26px;width:122.15px;height:11.5px;"></div>
<div class="ic" style="left:609.7px;top:354.26px">✓</div>
<div class="x" style="left:620.5px;top:354.11px;transform:scaleX(0.87);">TerminalCommand FileFailures</div>
<div class="dm" style="left:600.6px;top:357.06px;width:3.8px;height:3.8px;"></div>
<div class="ti" style="left:608.2px;top:366.48px;width:118.33px;height:11.5px;"></div>
<div class="ic" style="left:609.7px;top:367.48px">✓</div>
<div class="x" style="left:620.5px;top:367.33px;transform:scaleX(0.87);">TerminalCommand SubsetList</div>
<div class="dm" style="left:600.6px;top:370.28px;width:3.8px;height:3.8px;"></div>
<div class="ti" style="left:608.2px;top:379.7px;width:106.38px;height:11.5px;"></div>
<div class="ic" style="left:609.7px;top:380.7px">✓</div>
<div class="x" style="left:620.5px;top:380.55px;transform:scaleX(0.87);">TerminalCommand Closed</div>
<div class="dm" style="left:600.6px;top:383.5px;width:3.8px;height:3.8px;"></div>
<div class="ti" style="left:608.2px;top:392.92px;width:140.5px;height:11.5px;"></div>
<div class="ic" style="left:609.7px;top:393.92px">✓</div>
<div class="x" style="left:620.5px;top:393.77px;transform:scaleX(0.87);">TerminalCommand InputSubSplitFile</div>
<div class="dm" style="left:600.6px;top:396.72px;width:3.8px;height:3.8px;"></div>
<div class="a" style="left:664px;top:182.4px;width:18.5px;height:9.5px;background:#fff"></div>
<div class="a" style="left:597.5px;top:406px;width:130px;height:3px;border:1px solid #b4d2f2;border-bottom:none;border-radius:3px 3px 0 0;background:#f1f7fd"></div>
<div class="a" style="left:753px;top:48px;width:11.5px;height:359px;background:#f0f0f0"></div>
<div class="a" style="left:753.5px;top:124.5px;width:10.5px;height:144px;background:linear-gradient(90deg,#f6f6f6,#d6d6d6);border:1px solid #ababab;border-radius:2px"></div>
<div class="a" style="left:756.3px;top:193.5px;width:5px;height:1px;background:#777;box-shadow:0 2px #777,0 4px #777"></div>
<div class="a" style="left:755.8px;top:53px;width:0;height:0;border-left:3px solid transparent;border-right:3px solid transparent;border-bottom:3.5px solid #444"></div>
<div class="a" style="left:755.8px;top:399.5px;width:0;height:0;border-left:3px solid transparent;border-right:3px solid transparent;border-top:3.5px solid #444"></div>
<div class="a" style="left:579.5px;top:407.5px;width:185px;height:13px;background:#f0f0f0"></div>
<div class="a" style="left:582.5px;top:411.5px;width:0;height:0;border-top:2.5px solid transparent;border-bottom:2.5px solid transparent;border-right:3px solid #333"></div>
<div class="a" style="left:743.5px;top:411.5px;width:0;height:0;border-top:2.5px solid transparent;border-bottom:2.5px solid transparent;border-left:3px solid #333"></div>
<div class="a" style="left:592px;top:409px;width:32px;height:10.5px;background:linear-gradient(#f7f7f7,#dadada);border:1px solid #a8a8a8;border-radius:2px"></div>
<div class="a" style="left:605.5px;top:412.3px;width:1px;height:4px;background:#777;box-shadow:2px 0 #777,4px 0 #777"></div>
<div class="a" style="left:577px;top:422px;width:191px;height:117px;background:#c4dbf5"></div>
<div class="a" style="left:579px;top:426.5px;width:43.5px;height:13.5px;background:#bfd7f3;border:1px solid #9dbce3;border-bottom:none;border-radius:2px 2px 0 0"></div>
<div class="x" style="left:581.9px;top:428.34px;font-size:10px;transform:scaleX(0.9);color:#15233b;">Metadata</div>
<div class="a" style="left:622.5px;top:427px;width:28.5px;height:13px;background:#d5e1f0;border:1px solid #b4c8e1;border-bottom:none;border-radius:2px 2px 0 0"></div>
<div class="x" style="left:625.5px;top:428.34px;font-size:10px;transform:scaleX(0.9);color:#3c4656;">Detail</div>
<div class="a" style="left:578.5px;top:440px;width:186.5px;height:81px;background:#e0ecfa;border:1px solid #9dbce3"></div>
<div class="a" style="left:580.5px;top:442.5px;width:182.5px;height:77px;background:#fff;border:1px solid #abc6e8"></div>
<div class="a" style="left:580.5px;top:442.5px;width:182.5px;height:15px;background:#e5effa;border:1px solid #abc6e8"></div>
<div class="x" style="left:583.7px;top:445.04px;font-size:10px;transform:scaleX(1);color:#5a5a5a;font-weight:bold;">+</div>
<div class="x" style="left:591.5px;top:444.75px;color:#9ba4ae;">New Restricted String</div>
<div class="a" style="left:578.5px;top:524.5px;width:187px;height:11.5px;background:#fff;border:1px solid #abc6e8"></div>
<svg class="a" style="left:660px;top:420px" width="24" height="8" viewBox="660 420 24 8"><path d="M662.800 421h18l-9 5.500z" fill="#f6a92c"/></svg>
<svg class="a" style="left:0;top:0" width="768" height="539" viewBox="0 0 768 539"><defs><filter id="sh" x="-20%" y="-20%" width="140%" height="140%"><feGaussianBlur in="SourceAlpha" stdDeviation="1.300"/><feOffset dx="1.800" dy="2.200"/><feComponentTransfer><feFuncA type="linear" slope=".55"/></feComponentTransfer><feMerge><feMergeNode/><feMergeNode in="SourceGraphic"/></feMerge></filter></defs>
<g filter="url(#sh)" fill="#ea141a" stroke="#ea141a"><line x1="26.7" y1="376.8" x2="75.2" y2="329.34" stroke-width="7.4" stroke-linecap="round"/><path d="M78.8 335.89L82.7 322L68.73 325.6z" stroke-width="1.2" stroke-linejoin="round"/></g>
<g filter="url(#sh)" fill="#ea141a" stroke="#ea141a"><line x1="562.3" y1="229.3" x2="605.03" y2="205.51" stroke-width="7.4" stroke-linecap="round"/><path d="M606.78 212.77L614.2 200.4L599.78 200.19z" stroke-width="1.2" stroke-linejoin="round"/></g>
<g filter="url(#sh)" fill="#ea141a" stroke="#ea141a"><line x1="432.3" y1="437.5" x2="353.95" y2="463.85" stroke-width="7.4" stroke-linecap="round"/><path d="M353.55 456.39L344 467.2L358.14 470.04z" stroke-width="1.2" stroke-linejoin="round"/></g>
</svg>
</body></html>
